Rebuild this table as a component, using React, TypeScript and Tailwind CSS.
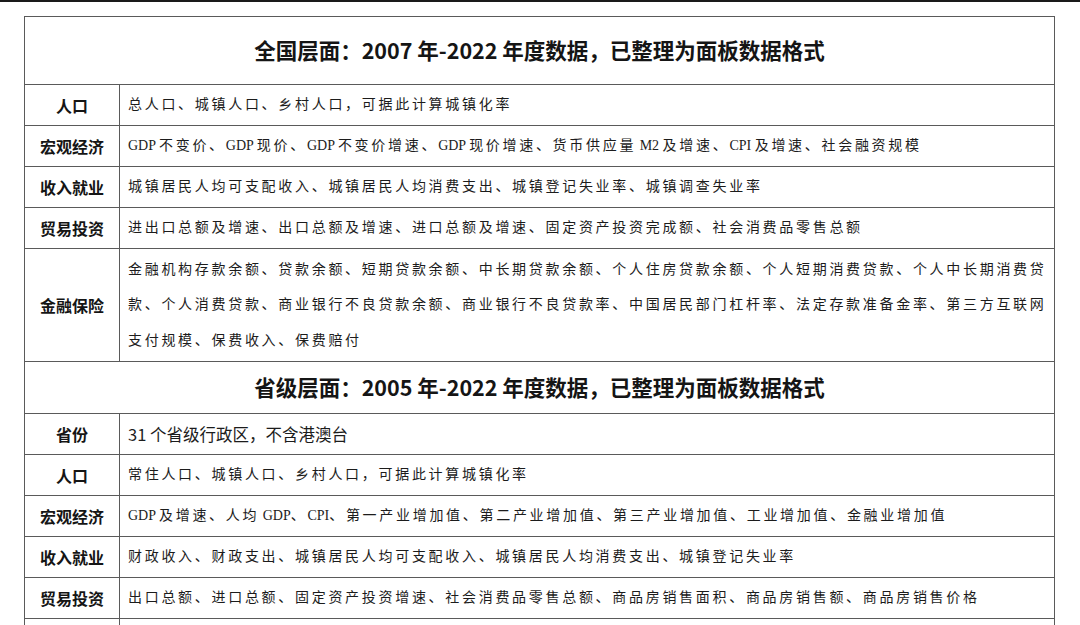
import React from "react";

type Row = { label: string; lines: string[]; sans?: boolean; tall?: boolean };

const national: Row[] = [
  { label: "人口", lines: ["总人口、城镇人口、乡村人口，可据此计算城镇化率"] },
  {
    label: "宏观经济",
    lines: ["GDP 不变价、GDP 现价、GDP 不变价增速、GDP 现价增速、货币供应量 M2 及增速、CPI 及增速、社会融资规模"],
  },
  { label: "收入就业", lines: ["城镇居民人均可支配收入、城镇居民人均消费支出、城镇登记失业率、城镇调查失业率"] },
  { label: "贸易投资", lines: ["进出口总额及增速、出口总额及增速、进口总额及增速、固定资产投资完成额、社会消费品零售总额"] },
  {
    label: "金融保险",
    tall: true,
    lines: [
      "金融机构存款余额、贷款余额、短期贷款余额、中长期贷款余额、个人住房贷款余额、个人短期消费贷款、个人中长期消费贷",
      "款、个人消费贷款、商业银行不良贷款余额、商业银行不良贷款率、中国居民部门杠杆率、法定存款准备金率、第三方互联网",
      "支付规模、保费收入、保费赔付",
    ],
  },
];

const provincial: Row[] = [
  { label: "省份", lines: ["31 个省级行政区，不含港澳台"], sans: true },
  { label: "人口", lines: ["常住人口、城镇人口、乡村人口，可据此计算城镇化率"] },
  {
    label: "宏观经济",
    lines: ["GDP 及增速、人均 GDP、CPI、第一产业增加值、第二产业增加值、第三产业增加值、工业增加值、金融业增加值"],
  },
  { label: "收入就业", lines: ["财政收入、财政支出、城镇居民人均可支配收入、城镇居民人均消费支出、城镇登记失业率"] },
  { label: "贸易投资", lines: ["出口总额、进口总额、固定资产投资增速、社会消费品零售总额、商品房销售面积、商品房销售额、商品房销售价格"] },
];

const sans = "font-['Noto_Sans_CJK_SC','Noto_Sans',sans-serif]";
const song = "font-['Liberation_Serif','Noto_Sans_CJK_SC',serif]";

// latin runs (GDP, CPI, M2) are set tight, unlike the spaced-out CJK text
function SongText({ text }: { text: string }) {
  const parts = text.split(/( ?[A-Za-z0-9]+ ?)/).filter(Boolean);
  return (
    <>
      {parts.map((p, i) =>
        /[A-Za-z0-9]/.test(p) ? (
          <span key={i} className="tracking-normal">
            {p}
          </span>
        ) : (
          <span key={i}>{p}</span>
        )
      )}
    </>
  );
}

function TitleRow({ text, h }: { text: string; h: string }) {
  return (
    <div className={`${h} flex items-center justify-center border-b border-[#5a5a5a]`}>
      <span className={`${sans} text-[21.5px] font-bold text-[#151515]`}>{text}</span>
    </div>
  );
}

function DataRow({ row }: { row: Row }) {
  return (
    <div className={`flex border-b border-[#5a5a5a] ${row.tall ? "h-[113px]" : "h-[41px]"}`}>
      <div className="w-[95px] shrink-0 flex items-center justify-center border-r border-[#5a5a5a]">
        <span className={`${sans} text-[16px] font-bold text-[#151515]`}>{row.label}</span>
      </div>
      <div className="flex-1 flex flex-col justify-center pl-2 whitespace-nowrap overflow-hidden">
        {row.lines.map((l, i) =>
          row.sans ? (
            <span key={i} className={`${sans} text-[16.5px] text-[#1c1c1c]`}>
              {l}
            </span>
          ) : (
            <span
              key={i}
              className={`${song} text-[14px] tracking-[2.7px] text-[#1c1c1c] ${row.tall ? "leading-[35.5px]" : "leading-[20px]"}`}
            >
              <SongText text={l} />
            </span>
          )
        )}
      </div>
    </div>
  );
}

export default function App() {
  return (
    <div className="w-[1080px] h-[625px] overflow-hidden bg-white">
      <div className="h-[2px] bg-[#1a1a1a]" />
      <div className="pt-[14px] pl-[24px] pr-[25px]">
        <div className="border-t border-l border-r border-[#5a5a5a]">
          <TitleRow text="全国层面：2007 年-2022 年度数据，已整理为面板数据格式" h="h-[68px]" />
          {national.map((r) => (
            <DataRow key={"n" + r.label} row={r} />
          ))}
          <TitleRow text="省级层面：2005 年-2022 年度数据，已整理为面板数据格式" h="h-[52px]" />
          {provincial.map((r) => (
            <DataRow key={"p" + r.label} row={r} />
          ))}
          {/* next row continues below the fold */}
          <div className="flex h-[41px]">
            <div className="w-[95px] shrink-0 border-r border-[#5a5a5a]" />
            <div className="flex-1" />
          </div>
        </div>
      </div>
    </div>
  );
}
